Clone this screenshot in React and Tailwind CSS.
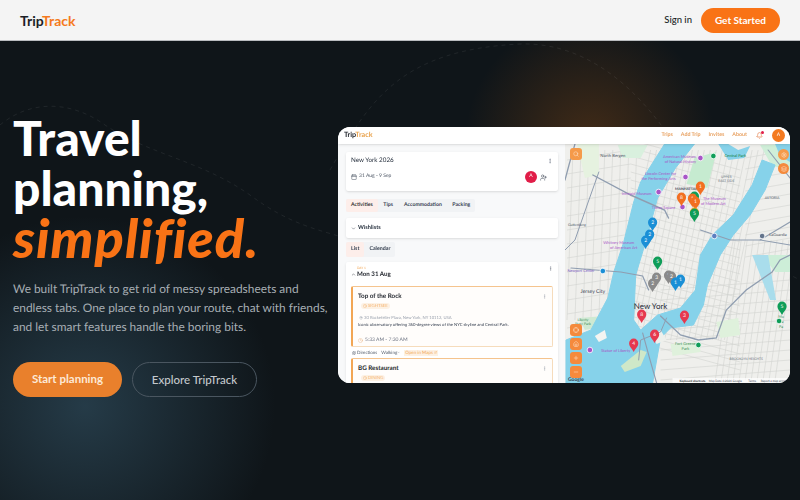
import React from "react";
import { Calendar, Clock, MapPin, MoreVertical, ChevronDown, ChevronUp, UserPlus, Search, Home, Plus, Minus, Crosshair, Bell, ExternalLink, Map as MapIcon, Layers, Settings } from "lucide-react";

const font = { fontFamily: "Lato, 'Open Sans', sans-serif" };

function Pin({ x, y, c, n, s = 1.1 }) {
  return (
    <g transform={`translate(${x} ${y}) scale(${s})`}>
      <path d="M0 0C-1.2-3-4.2-4.6-4.2-8A4.2 4.2 0 1 1 4.2-8C4.2-4.6 1.2-3 0 0Z" fill={c} />
      <text x="0" y="-6.4" fontSize="4.6" fill="#fff" textAnchor="middle" fontFamily="Lato, sans-serif">{n}</text>
    </g>
  );
}

function Poi({ x, y, c }) {
  return <circle cx={x} cy={y} r="2.8" fill={c} stroke="#fff" strokeWidth="0.8" />;
}

function Label({ x, y, c = "#a855c7", size = 4.4, w = 400, children, a = "middle" }) {
  return <text x={x} y={y} fontSize={size} fill={c} fontWeight={w} textAnchor={a} fontFamily="Lato, sans-serif">{children}</text>;
}

function CityMap() {
  return (
    <svg viewBox="564 144 226 239" className="w-full h-full block" preserveAspectRatio="none">
      <rect x="564" y="144" width="226" height="239" fill="#efefec" />
      {/* streets */}
      <g stroke="#d2d3d0" strokeWidth="0.6" fill="none">
        {Array.from({ length: 20 }, (_, i) => <path key={i} d={`M${650 + i * 6} 150L${610 + i * 6} 340`} />)}
        {Array.from({ length: 26 }, (_, i) => <path key={"h" + i} d={`M630 ${140 + i * 8}L740 ${170 + i * 8}`} />)}
        {Array.from({ length: 14 }, (_, i) => <path key={"w" + i} d={`M566 ${160 + i * 14}L630 ${150 + i * 14}`} />)}
        {Array.from({ length: 9 }, (_, i) => <path key={"v" + i} d={`M${572 + i * 8} 150L${566 + i * 8} 320`} />)}
        {Array.from({ length: 11 }, (_, i) => <path key={"e" + i} d={`M${735 + i * 6} 240L${715 + i * 6} 380`} />)}
        {Array.from({ length: 11 }, (_, i) => <path key={"f" + i} d={`M660 ${290 + i * 10}L790 ${280 + i * 10}`} />)}
        {Array.from({ length: 10 }, (_, i) => <path key={"n" + i} d={`M745 ${158 + i * 11}L790 ${150 + i * 11}`} />)}
      </g>
      {/* parks */}
      <path d="M617 145L647 145L640 158L622 158Z" fill="#d9f0de" />
      <path d="M576 144L598 144L598 175L584 178Z" fill="#e6f2e0" />
      <path d="M694 158L716 152L707 188L686 184Z" fill="#c6ebd0" />
      <path d="M760 145L790 144L790 170L772 166Z" fill="#cfeed8" />
      <path d="M762 255L790 255L790 272L775 272Z" fill="#cdeed8" />
      <path d="M578 318L604 316L606 326L584 330Z" fill="#cfe9d2" />
      <path d="M716 322L738 318L740 335L720 338Z" fill="#dff1dc" />
      <path d="M670 344L700 342L700 352L672 356Z" fill="#dff1dc" />
      {/* water */}
      <path fill="#86d2ea" stroke="#86d2ea" strokeLinejoin="round" d="M664 144L694 144L675 168L657 198L645 242L635 275L633 320L640 330L657 315L680 308L695 290L700 255L712 235L733 215L752 185L762 160L775 165L765 190L750 215L733 235L720 255L707 285L703 305L693 325L670 328L660 338L652 383L565 383L565 340L590 330L607 298L613 272L623 242L633 202L640 182Z" />
      <path fill="#86d2ea" d="M718 144L728 144L738 150L750 146L744 158L728 160Z" />
      <path fill="#86d2ea" d="M775 144L790 144L790 162L780 156Z" />
      <path fill="#a9ddec" d="M752 255L768 255L776 300L770 300Z" />
      {/* land in bay */}
      <path d="M620 366L640 350L646 352L640 366L624 372Z" fill="#cfe8c8" />
      <path d="M594 336L604 330L606 338L598 342Z" fill="#f4f4f1" />
      <path d="M652 336L660 330L666 340L656 344Z" fill="#eef0ec" />
      {/* highways */}
      <g stroke="#8f9db0" fill="none" strokeLinecap="round">
        <path d="M592 175L630 195L664 210L668 218" strokeWidth="1.4" />
        <path d="M574 144L568 165L564 180" strokeWidth="1.3" />
        <path d="M598 172L588 200L574 240L564 250" strokeWidth="1" />
        <path d="M570 268L620 272L642 276L648 290" strokeWidth="1.2" />
        <path d="M700 230L730 240L760 240L790 222" strokeWidth="1.1" />
        <path d="M760 240L790 245" strokeWidth="1" />
        <path d="M660 316L680 335L698 340L716 338L726 310L746 290L772 272L780 260L790 255" strokeWidth="1.3" />
        <path d="M642 333L650 362L656 383" strokeWidth="1.1" />
        <path d="M666 318L660 332L640 340L638 360" strokeWidth="1" />
        <path d="M768 150L790 178" strokeWidth="1.1" />
      </g>
      {/* Labels */}
      <Label x="612" y="157" c="#4b5563" size="4.2">North Bergen</Label>
      <Label x="679" y="158" size="4">American Museum</Label>
      <Label x="680" y="163" size="4">of Natural History</Label>
      <Label x="660" y="175" size="4">Lincoln Center for</Label>
      <Label x="658" y="180" size="4">the Performing Arts</Label>
      <Label x="636" y="195" size="4">Intrepid Museum</Label>
      <Label x="686" y="190" c="#374151" size="3.6" w={700}>MANHATTAN</Label>
      <Label x="663" y="209" size="4">Times Square</Label>
      <Label x="714" y="200" size="4">The Museum</Label>
      <Label x="713" y="205" size="4">of Modern Art</Label>
      <Label x="735" y="157" c="#15803d" size="4">Central Park</Label>
      <Label x="726" y="178" c="#6b7280" size="3.4">UPPER</Label>
      <Label x="726" y="182" c="#6b7280" size="3.4">EAST SIDE</Label>
      <Label x="772" y="199" c="#4b5563" size="3.6">ASTORIA</Label>
      <Label x="778" y="236" c="#4b5563" size="4">LaGuardia</Label>
      <Label x="576" y="226" c="#4b5563" size="3.6">Guttenberg</Label>
      <Label x="618" y="244" size="4">Whitney Museum</Label>
      <Label x="623" y="249" size="4">of American Art</Label>
      <Label x="580" y="272" c="#7c5cc4" size="3.8">Newport Center</Label>
      <Label x="592" y="293" c="#374151" size="5.2">Jersey City</Label>
      <Label x="650" y="309" c="#1f2937" size="8">New York</Label>
      <Label x="582" y="321" c="#3f8f5b" size="3.6">Liberty</Label>
      <Label x="582" y="325" c="#3f8f5b" size="3.6">State Park</Label>
      <Label x="615" y="352" size="4">Statue of Liberty</Label>
      <Label x="685" y="345" c="#3f8f5b" size="4">Fort Greene</Label>
      <Label x="685" y="350" c="#3f8f5b" size="4">Park</Label>
      <Label x="746" y="360" c="#6b7280" size="3.4">BROOKLYN HEIGHTS</Label>
      <Label x="781" y="318" c="#3f8f5b" size="3.8">Mu</Label>
      <Label x="781" y="323" c="#3f8f5b" size="3.8">Ha</Label>
      <Label x="781" y="328" c="#3f8f5b" size="3.8">Pa</Label>
      {/* POIs */}
      <Poi x="713" y="156" c="#0f9d58" />
      <Poi x="700" y="158" c="#a855c7" />
      <Poi x="685" y="177" c="#a855c7" />
      <Poi x="658" y="192" c="#a855c7" />
      <Poi x="682" y="207" c="#a855c7" />
      <Poi x="762" y="236" c="#64748b" />
      <Poi x="714" y="236" c="#5b7fc0" />
      <Poi x="602" y="271" c="#1a8fd6" />
      <Poi x="589" y="350" c="#a855c7" />
      <Poi x="698" y="345" c="#0f9d58" />
      <Poi x="779" y="321" c="#0f9d58" />
      {/* Pins */}
      <Pin x="652" y="231" c="#1a8fd6" n="2" />
      <Pin x="649" y="243" c="#1a8fd6" n="2" />
      <Pin x="645" y="249" c="#1a8fd6" n="2" />
      <Pin x="700" y="195" c="#f26f21" n="1" />
      <Pin x="694" y="205" c="#0f9d58" n="1" />
      <Pin x="681" y="206" c="#f26f21" n="8" />
      <Pin x="692" y="207" c="#f26f21" n="1" />
      <Pin x="695" y="210" c="#f26f21" n="1" />
      <Pin x="694" y="221" c="#f5a623" n="1" />
      <Pin x="694" y="222" c="#0f9d58" n="5" />
      <Pin x="657" y="270" c="#0f9d58" n="5" />
      <Pin x="656" y="286" c="#8a8a8a" n="3" />
      <Pin x="652" y="292" c="#8a8a8a" n="2" />
      <Pin x="668" y="284" c="#8a8a8a" n="5" />
      <Pin x="671" y="285" c="#8a8a8a" n="2" />
      <Pin x="680" y="288" c="#1a8fd6" n="1" />
      <Pin x="675" y="291" c="#1a8fd6" n="1" />
      <Pin x="641" y="323" c="#e6394f" n="8" />
      <Pin x="684" y="324" c="#e6394f" n="3" />
      <Pin x="654" y="343" c="#e6394f" n="6" />
      <Pin x="633" y="352" c="#e6394f" n="4" />
      <Pin x="782" y="315" c="#0f9d58" n="5" />
      <Label x="575" y="381" c="#374151" size="5" w={700}>Google</Label>
      <rect x="672" y="378" width="118" height="5" fill="#fff" opacity="0.7" />
      <Label x="692" y="382" c="#111827" size="3" w={700}>Keyboard shortcuts</Label>
      <Label x="725" y="382" c="#374151" size="3">Map Data ©2026 Google</Label>
      <Label x="752" y="382" c="#374151" size="3">Terms</Label>
      <Label x="773" y="382" c="#374151" size="3">Report a map error</Label>
    </svg>
  );
}

function MapBtn({ children }) {
  return <div className="w-[12px] h-[12px] rounded-[3px] bg-[#f58a3c] flex items-center justify-center text-[#fde6d3]">{children}</div>;
}

function ItemCard({ title, badge, children }) {
  return (
    <div className="rounded-[2px] bg-[#fffdfb] border border-[#f6dcbc] border-l-2 border-l-[#f2a654] border-t-[#f5c48e] px-[5px] pt-[5px] pb-[3px] shrink-0">
      <div className="flex justify-between items-center">
        <span className="text-[6.3px] leading-[9px] font-bold text-[#1b1f27]">{title}</span>
        <MoreVertical size={5} className="text-[#9ca3af]" />
      </div>
      <div className="flex mt-[2px] ml-[3px]">
        <span className="flex items-center gap-[1px] rounded-full bg-[#fdf1e3] text-[#f5b26e] text-[4.3px] leading-[6px] px-[2px]">
          <Clock size={4} />{badge}
        </span>
      </div>
      {children}
    </div>
  );
}

function AppShot() {
  return (
    <div className="w-[452px] h-[256px] rounded-xl bg-white overflow-hidden flex flex-col shrink-0 text-[#1f2937] [text-rendering:geometricPrecision]">
      <div className="h-[17px] shrink-0 bg-white flex items-center justify-between pl-[6px] pr-[5px] shadow-sm relative z-10">
        <span className="text-[7.2px] font-bold"><span className="text-[#1b1f27]">Trip</span><span className="text-[#e9a34e]">Track</span></span>
        <div className="flex items-center gap-[8px] text-[5.3px] font-bold text-[#e8a263]">
          <span>Trips</span><span>Add Trip</span><span>Invites</span><span>About</span>
          <span className="relative ml-[1px] mr-[1px]">
            <Bell size={7} className="text-[#e2733a]" />
            <span className="absolute -top-[1px] -right-[1px] w-[3px] h-[3px] rounded-full bg-[#e11d48]" />
          </span>
          <span className="w-[13px] h-[13px] rounded-full bg-[#f47a20] text-white flex items-center justify-center text-[5px] font-normal">A</span>
        </div>
      </div>
      <div className="flex-1 flex min-h-0">
        <div className="w-[227px] shrink-0 bg-[#f8f9fa] pl-[8px] pr-[7px] pt-[8px] flex flex-col overflow-hidden">
          <div className="bg-white rounded-[2px] shadow-sm h-[39px] shrink-0 pl-[5px] pr-[5px] pt-[5px] flex flex-col">
            <div className="flex justify-between items-center">
              <span className="text-[6.3px] leading-[8px] text-[#1f2937]">New York 2026</span>
              <MoreVertical size={6} className="text-[#6b7280]" />
            </div>
            <div className="flex justify-between items-center mt-[6px]">
              <span className="flex items-center gap-[2px] text-[5px] text-[#4b5563]"><Calendar size={6} />31 Aug - 9 Sep</span>
              <span className="flex items-center gap-[3px] pr-[6px]">
                <span className="w-[12px] h-[12px] rounded-full bg-[#e11d48] text-white text-[5px] flex items-center justify-center">A</span>
                <UserPlus size={7} className="text-[#4b5563]" />
              </span>
            </div>
          </div>
          <div className="flex mt-[8px] text-[5.2px] font-bold text-[#374151] h-[13px] shrink-0 self-start rounded-[2px] bg-[#f1f3f5]">
            <span className="px-[5px] flex items-center rounded-[2px] bg-[#fdeeea] text-[#333]">Activities</span>
            <span className="px-[5.5px] flex items-center">Tips</span>
            <span className="px-[5.5px] flex items-center">Accommodation</span>
            <span className="px-[5px] flex items-center">Packing</span>
          </div>
          <div className="bg-white rounded-[2px] shadow-sm h-[20px] shrink-0 mt-[6px] flex items-center pl-[5px] gap-[2px] text-[5.6px] font-bold">
            <ChevronDown size={5} />Wishlists
          </div>
          <div className="flex mt-[4px] text-[5.3px] font-bold text-[#374151] h-[15px] shrink-0 self-start rounded-[2px] bg-[#f1f3f5]">
            <span className="px-[5px] flex items-center rounded-[2px] bg-[#fdeeea]">List</span>
            <span className="px-[5px] flex items-center">Calendar</span>
          </div>
          <div className="bg-white rounded-t-[2px] shadow-sm flex-1 mt-[5px] px-[5px] pt-[4px] flex flex-col overflow-hidden">
            <div className="h-[16px] shrink-0">
              <div className="flex justify-between">
                <span className="text-[3.2px] leading-[5px] ml-[6px] text-[#f2a654]">DAY 1</span>
                <MoreVertical size={5} className="text-[#6b7280]" />
              </div>
              <div className="flex items-center gap-[1px] text-[6.2px] leading-[7px] font-bold text-[#1b1f27]">
                <ChevronUp size={5} />Mon 31 Aug
              </div>
            </div>
            <div className="mt-[4px] shrink-0">
              <ItemCard title="Top of the Rock" badge="SIGHTSEE">
                <div className="flex items-center gap-[1px] text-[4.2px] text-[#9ca3af] mt-[6px] leading-[5px] ml-[1px]"><MapPin size={4} />30 Rockefeller Plaza, New York, NY 10112, USA</div>
                <div className="text-[4.2px] leading-[6px] text-[#374151] mt-[2px] whitespace-nowrap">Iconic observatory offering 360-degree views of the NYC skyline and Central Park.</div>
                <div className="flex items-center gap-[2px] text-[5px] text-[#6b7280] mt-[9px] leading-[6px]"><Clock size={5} className="text-[#eab787]" />5:33 AM - 7:30 AM</div>
              </ItemCard>
            </div>
            <div className="mt-[2px] ml-[1px] h-[7px] shrink-0 flex items-center gap-[4px] text-[4.5px] leading-[6px] text-[#4b5563]">
              <span className="flex items-center gap-[1px]"><MapIcon size={4} />Directions</span>
              <span className="flex items-center">Walking<ChevronDown size={3} /></span>
              <span className="flex items-center gap-[1px] bg-[#fdf1e3] text-[#f2a654] px-[1px]">Open in Maps<ExternalLink size={3} /></span>
            </div>
            <div className="mt-[2px] shrink-0"><ItemCard title="BG Restaurant" badge="DINING" /></div>
          </div>
        </div>
        <div className="flex-1 relative min-w-0">
          <CityMap />
          <div className="absolute left-[5px] top-[4px]"><div className="w-[12px] h-[12px] rounded-[3px] bg-[#f59a4a] flex items-center justify-center text-[#fde6d3]"><Search size={6} /></div></div>
          <div className="absolute right-[1px] top-[5px] flex flex-col gap-[3px]">
            <div className="w-[11px] h-[11px] rounded-full bg-[#f59a4a] flex items-center justify-center text-[#fde6d3]"><Settings size={6} /></div>
            <div className="w-[11px] h-[11px] rounded-full bg-[#f58a3c] flex items-center justify-center text-[#fde6d3]"><Layers size={6} /></div>
          </div>
          <div className="absolute left-[5px] bottom-[5px] flex flex-col gap-[2px]">
            <MapBtn><Crosshair size={6} /></MapBtn>
            <MapBtn><Home size={6} /></MapBtn>
            <MapBtn><Plus size={6} /></MapBtn>
            <MapBtn><Minus size={6} /></MapBtn>
          </div>
        </div>
      </div>
    </div>
  );
}

export default function App() {
  return (
    <div style={font} className="w-[800px] h-[500px] overflow-hidden flex flex-col bg-[#0f1519]">
      <header className="h-[41px] shrink-0 bg-[#f4f4f4] border-b border-[#b9bcbf] flex items-center justify-between pl-[20px] pr-[20px] relative z-10">
        <span className="text-[14px] font-bold"><span className="text-[#1b1f27]">Trip</span><span className="text-[#f47a20]">Track</span></span>
        <div className="flex items-center gap-[9px]">
          <span className="text-[9.5px] font-medium text-[#1b1f27]">Sign in</span>
          <span className="w-[79px] h-[25px] rounded-full bg-[#f97316] text-white text-[10px] font-bold flex items-center justify-center">Get Started</span>
        </div>
      </header>
      <main className="flex-1 relative overflow-hidden flex items-start justify-between pl-[13px] pr-[10px]">
        <div className="absolute inset-0 bg-[radial-gradient(circle_at_590px_100px,rgba(150,80,20,0.38),rgba(150,80,20,0)_125px),radial-gradient(circle_at_85px_365px,rgba(55,90,110,0.55),rgba(55,90,110,0)_190px)]" />
        <svg className="absolute inset-0 w-full h-full" viewBox="0 41 800 459" fill="none" stroke="#ffffff" strokeOpacity="0.07" strokeWidth="1" strokeDasharray="4 4">
          <path d="M0 125C30 100 70 100 105 125C150 155 200 160 250 195C290 225 320 230 345 238" />
          <path d="M330 170C370 100 400 50 520 44C580 42 640 80 690 170C720 230 760 260 800 280" />
        </svg>
        <section className="relative w-[322px] shrink-0 pt-[72px]">
          <h1 className="text-[48px] leading-[50px] font-black text-white">
            Travel<br />planning,<br /><span className="italic font-black text-[#f97316] text-[54px] tracking-[1px]">simplified.</span>
          </h1>
          <p className="mt-[14px] text-[11.9px] leading-[19px] text-[#a6adb3] w-[325px] whitespace-nowrap [text-rendering:geometricPrecision]">
            We built TripTrack to get rid of messy spreadsheets and<br />endless tabs. One place to plan your route, chat with friends,<br />and let smart features handle the boring bits.
          </p>
          <div className="mt-[26px] flex gap-[10px]">
            <span className="w-[109px] h-[35px] rounded-full bg-[#e9802c] text-[#fde9d6] text-[11.5px] font-bold flex items-center justify-center pb-[2px]">Start planning</span>
            <span className="w-[125px] h-[35px] rounded-full border border-[#4a5660] text-[#c3c8cc] text-[11.5px] font-medium flex items-center justify-center">Explore TripTrack</span>
          </div>
        </section>
        <div className="relative pt-[86px]">
          <div className="blur-[0.3px]"><AppShot /></div>
        </div>
      </main>
    </div>
  );
}
